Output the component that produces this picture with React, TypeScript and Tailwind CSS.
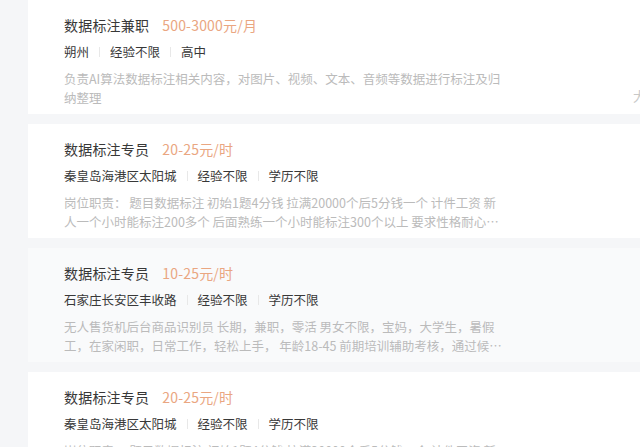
const jobs = [
  {
    title: "数据标注兼职",
    salary: "500-3000元/月",
    tags: ["朔州", "经验不限", "高中"],
    desc: "负责AI算法数据标注相关内容，对图片、视频、文本、音频等数据进行标注及归纳整理",
  },
  {
    title: "数据标注专员",
    salary: "20-25元/时",
    tags: ["秦皇岛海港区太阳城", "经验不限", "学历不限"],
    desc: "岗位职责：  题目数据标注 初始1题4分钱 拉满20000个后5分钱一个 计件工资 新人一个小时能标注200多个 后面熟练一个小时能标注300个以上 要求性格耐心细致",
  },
  {
    title: "数据标注专员",
    salary: "10-25元/时",
    tags: ["石家庄长安区丰收路", "经验不限", "学历不限"],
    desc: "无人售货机后台商品识别员 长期，兼职，零活 男女不限，宝妈，大学生，暑假工，在家闲职，日常工作，轻松上手， 年龄18-45 前期培训辅助考核，通过候选人可长期合作",
    hover: true,
  },
  {
    title: "数据标注专员",
    salary: "20-25元/时",
    tags: ["秦皇岛海港区太阳城", "经验不限", "学历不限"],
    desc: "岗位职责：  题目数据标注 初始1题4分钱 拉满20000个后5分钱一个 计件工资 新人一个小时能标注200多个 后面熟练一个小时能标注300个以上 要求性格耐心细致",
  },
];

const App = () => {
  return (
    <div
      className="w-[640px] h-[447px] overflow-hidden bg-[#f5f6f8] relative"
      style={{ fontFamily: '"Noto Sans CJK SC", "Noto Sans", sans-serif' }}
    >
      <div className="ml-[28px] flex flex-col gap-[10px]">
        {jobs.map((job, i) => (
          <div
            key={i}
            className={`relative h-[114px] shrink-0 pl-[36px] pt-[15px] ${job.hover ? "bg-[#f9fafb]" : "bg-white"}`}
          >
            {/* title + salary */}
            <div className="flex items-center gap-[13px] h-[20px]">
              <span className="text-[14px] text-[#383838] tracking-[0.2px]">{job.title}</span>
              <span className="text-[14px] text-[#eaa681] tracking-[0.2px]">{job.salary}</span>
            </div>

            {/* tags */}
            <div className="flex items-center h-[20px] mt-[7px] text-[12.5px] text-[#383838]">
              {job.tags.map((t, j) => (
                <div key={j} className="flex items-center">
                  {j > 0 && <span className="block mx-[10px] w-px h-[10px] bg-[#e8e8e8]" />}
                  <span>{t}</span>
                </div>
              ))}
            </div>

            {/* description */}
            <p className="mt-[7px] w-[444px] text-[12.5px] leading-[19px] text-[#bbbbbb] line-clamp-2">
              {job.desc}
            </p>

            {i === 0 && (
              <span className="absolute right-[-6px] top-[86px] text-[13px] text-[#c8c8c8]">大</span>
            )}
          </div>
        ))}
      </div>
    </div>
  );
};

export default App;
